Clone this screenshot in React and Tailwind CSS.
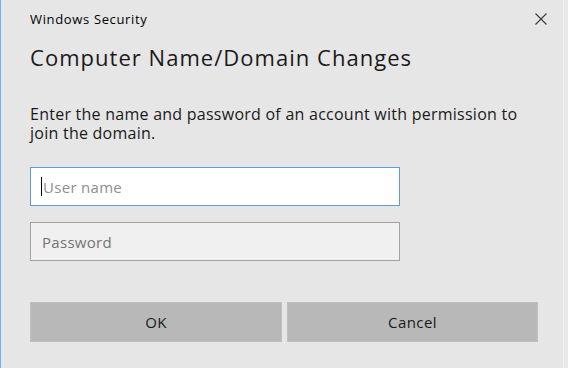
import { useState } from "react";

function App() {
  const [username, setUsername] = useState("");
  const [password, setPassword] = useState("");

  return (
    <div className="w-[568px] h-[368px] bg-[#e9e9e9] overflow-hidden">
      <div
        className="w-[564px] h-[368px] bg-[#e6e6e6] border-l border-[#79b0e6] border-r border-r-[#f1f1f1] flex flex-col text-[#1b1b1b]"
        style={{ fontFamily: '"Open Sans", "Noto Sans", sans-serif' }}
      >
        {/* заголовок окна */}
        <div className="flex items-center justify-between pl-[29px] pr-[16px] pt-[11px] h-[27px]">
          <span className="text-[13px] leading-[16px] tracking-[0.65px] text-black">Windows Security</span>
          <button className="w-[12px] h-[12px] flex items-center justify-center">
            <svg width="12" height="12" viewBox="0 0 12 12">
              <path d="M0.5 0.5 L11.5 11.5 M11.5 0.5 L0.5 11.5" stroke="#3a3a3a" strokeWidth="1.1" />
            </svg>
          </button>
        </div>

        <div className="flex flex-col pl-[29px] pr-[25px]">
          <h1 className="mt-[16px] text-[22px] leading-[28px] tracking-[1.03px] text-[#1a1a1a]">
            Computer Name/Domain Changes
          </h1>

          <p className="mt-[34px] text-[16px] leading-[19px] tracking-[0.25px] text-[#1a1a1a]">
            Enter the name and password of an account with permission to join the domain.
          </p>

          <div className="relative mt-[24px] w-[370px] h-[39px]">
            <input
              type="text"
              placeholder="User name"
              value={username}
              onChange={(e) => setUsername(e.target.value)}
              className="w-full h-full pl-[12px] pr-[11px] bg-white border border-[#5c9bd8] text-[15px] tracking-[0.3px] placeholder:text-[#8e8e8e] outline-none"
            />
            {/* курсор */}
            {username === "" && (
              <span className="absolute left-[11px] top-[10px] w-[1px] h-[19px] bg-black" />
            )}
          </div>
          <input
            type="password"
            placeholder="Password"
            value={password}
            onChange={(e) => setPassword(e.target.value)}
            className="mt-[16px] w-[370px] h-[39px] px-[11px] bg-[#f0f0f0] border border-[#a3a3a3] text-[15px] tracking-[0.3px] placeholder:text-[#747474] outline-none"
          />

          <div className="mt-[41px] flex gap-[5px]">
            <button className="w-[252px] h-[40px] bg-[#b8b8b8] border border-[#bfbfbf] text-[15px] tracking-[0.4px] text-[#1a1a1a]">
              OK
            </button>
            <button className="w-[251px] h-[40px] bg-[#b8b8b8] border border-[#bfbfbf] text-[15px] tracking-[0.4px] text-[#1a1a1a]">
              Cancel
            </button>
          </div>
        </div>
      </div>
    </div>
  );
}

export default App;
